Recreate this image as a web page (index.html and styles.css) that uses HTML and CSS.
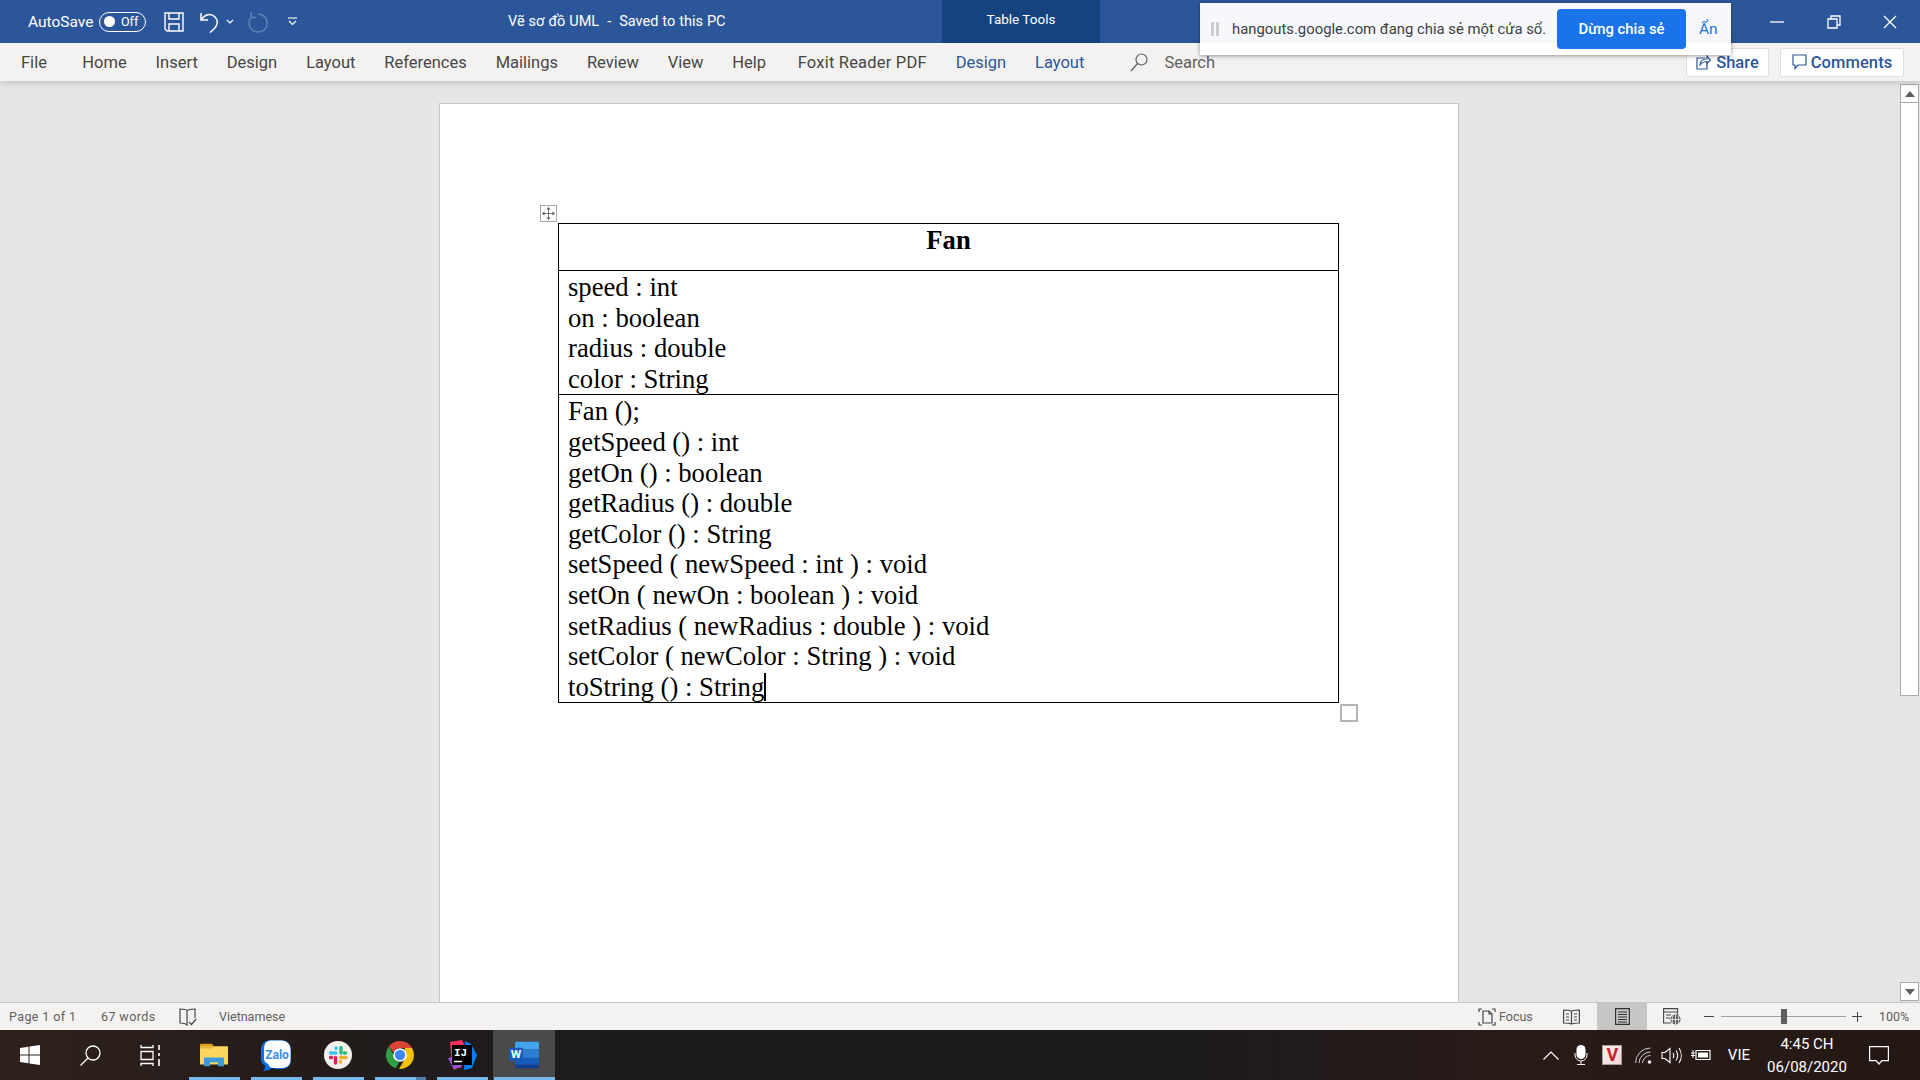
FILE: index.html
```html
<!DOCTYPE html>
<html lang="en">

<head>
    <meta charset="UTF-8">
    <title>Vẽ sơ đồ UML - Word</title>
    <link rel="stylesheet" href="styles.css">
</head>

<body>

    <div class="titlebar">
        <div class="qat">
            <span class="autosave">AutoSave</span>
            <span class="toggle"><i class="knob"></i><span>Off</span></span>
            <svg class="ico-save" width="20" height="20" viewBox="0 0 20 20" fill="none" stroke="#fff" stroke-width="1.4">
                <path d="M1 1h18v18H3l-2-2z"/><path d="M5 1v6h10V1"/><path d="M5 19v-7h10v7"/>
            </svg>
            <svg class="ico-undo" width="19" height="22" viewBox="0 0 19 22" fill="none" stroke="#fff" stroke-width="1.5">
                <path d="M1 2v7h7"/><path d="M1.5 8.5C5 3 11 2 15 6c4 4 2 9-1 12l-4 3.500"/>
            </svg>
            <svg class="ico-caret" width="8" height="5" viewBox="0 0 8 5" fill="none" stroke="#fff" stroke-width="1.200"><path d="M1 1l3 3 3-3"/></svg>
            <svg class="ico-redo" width="20" height="22" viewBox="0 0 20 22" fill="none" stroke="#5f83b8" stroke-width="1.500">
                <path d="M10 3a9 9 0 1 1-7 3.500"/><path d="M3 1v5.500h5"/>
            </svg>
            <svg class="ico-more" width="9" height="9" viewBox="0 0 9 9" fill="none" stroke="#fff" stroke-width="1.100"><path d="M0 1h9"/><path d="M1 4l3.500 3.500L8 4"/></svg>
        </div>
        <div class="doc-title">Vẽ sơ đồ UML &nbsp;-&nbsp; Saved to this PC</div>
        <div class="context">Table Tools</div>
        <div class="win-controls">
            <svg width="14" height="14" viewBox="0 0 14 14" stroke="#fff" stroke-width="1.300"><path d="M0 7h14"/></svg>
            <svg width="14" height="14" viewBox="0 0 14 14" fill="none" stroke="#fff" stroke-width="1.300"><path d="M1 4h9v9H1z"/><path d="M4 4V1h9v9h-3"/></svg>
            <svg width="14" height="14" viewBox="0 0 14 14" stroke="#fff" stroke-width="1.300"><path d="M1 1l12 12M13 1L1 13"/></svg>
        </div>
    </div>

    <div class="ribbon">
        <nav class="tabs">
            <a class="tab tab-file">File</a>
            <a class="tab">Home</a>
            <a class="tab">Insert</a>
            <a class="tab">Design</a>
            <a class="tab">Layout</a>
            <a class="tab">References</a>
            <a class="tab">Mailings</a>
            <a class="tab">Review</a>
            <a class="tab">View</a>
            <a class="tab">Help</a>
            <a class="tab tab-foxit">Foxit Reader PDF</a>
            <a class="tab tab-tool">Design</a>
            <a class="tab tab-tool">Layout</a>
        </nav>
        <div class="search">
            <svg width="18" height="19" viewBox="0 0 18 19" fill="none" stroke="#605e5c" stroke-width="1.200"><circle cx="11.500" cy="6.500" r="5.500"/><path d="M7.500 10.500L1 18"/></svg>
            <span>Search</span>
        </div>
        <div class="ribbon-actions">
            <a class="pill pill-share">
                <svg width="15" height="16" viewBox="0 0 15 16" fill="none" stroke="#2b579a" stroke-width="1.200"><path d="M9 4H1v11h10V9"/><path d="M4 11c0-4 3-6 7-6V2l3.500 4L11 9.500V7.500c-3 0-5 1-7 3.500z"/></svg>
                Share
            </a>
            <a class="pill pill-comments">
                <svg width="15" height="16" viewBox="0 0 15 16" fill="none" stroke="#2b579a" stroke-width="1.200"><path d="M1 1h13v10H6l-3 3.500V11H1z"/></svg>
                Comments
            </a>
        </div>
    </div>

    <div class="share-bar">
        <span class="grip"><i></i><i></i></span>
        <span class="share-text">hangouts.google.com đang chia sẻ một cửa sổ.</span>
        <button class="stop-btn">Dừng chia sẻ</button>
        <span class="hide-link">Ẩn</span>
    </div>

    <div class="workspace">
        <div class="doc-area">
            <div class="page">
                <div class="table-wrap">
                    <span class="move-handle">
                        <svg width="13" height="13" viewBox="0 0 13 13" fill="#555" stroke="#555" stroke-width=".8">
                            <path d="M6.500 1v11M1 6.500h11" fill="none"/>
                            <path d="M6.500 0l2 2.500H4.500zM6.500 13l-2-2.500h4zM0 6.500l2.500-2v4zM13 6.500l-2.500 2v-4z" stroke="none"/>
                        </svg>
                    </span>
                    <table class="uml">
                        <tr class="row-name"><td>Fan</td></tr>
                        <tr class="row-attrs">
                            <td>
                                speed : int<br>
                                on : boolean<br>
                                radius : double<br>
                                color : String
                            </td>
                        </tr>
                        <tr class="row-methods">
                            <td>
                                Fan ();<br>
                                getSpeed () : int<br>
                                getOn () : boolean<br>
                                getRadius () : double<br>
                                getColor () : String<br>
                                setSpeed ( newSpeed : int ) : void<br>
                                setOn ( newOn : boolean ) : void<br>
                                setRadius ( newRadius : double ) : void<br>
                                setColor ( newColor : String ) : void<br>
                                toString () : String<span class="caret"></span>
                            </td>
                        </tr>
                    </table>
                    <span class="resize-handle"></span>
                </div>
            </div>
        </div>
        <div class="scrollbar">
            <span class="sb-btn"><i class="arrow-up"></i></span>
            <span class="sb-thumb"></span>
            <span class="sb-track"></span>
            <span class="sb-btn"><i class="arrow-down"></i></span>
        </div>
    </div>

    <div class="statusbar">
        <span class="st-page">Page 1 of 1</span>
        <span class="st-words">67 words</span>
        <svg class="st-book" width="18" height="18" viewBox="0 0 18 18" fill="none" stroke="#484644" stroke-width="1.200">
            <path d="M9 3C7 1 4 1 1 1v14c3 0 5 0 7 2V3c2-2 5-2 8-2v9"/><path d="M10 14l2.500 2.500L17 11"/>
        </svg>
        <span class="st-lang">Vietnamese</span>
        <div class="st-right">
            <svg class="st-focus" width="18" height="18" viewBox="0 0 18 18" fill="none" stroke="#484644" stroke-width="1.200">
                <path d="M1 4V1h3M14 1h3v3M17 14v3h-3M4 17H1v-3"/><path d="M5 3h6l3 3v9H5z"/><path d="M11 3v3h3"/>
            </svg>
            <span class="st-focus-text">Focus</span>
            <svg class="st-read" width="17" height="16" viewBox="0 0 17 16" fill="none" stroke="#484644" stroke-width="1.200">
                <path d="M8.500 2C6 1 3 1 .600 1v13c2.400 0 5.400 0 7.900 1 2.500-1 5.500-1 7.900-1V1C14 1 11 1 8.500 2zM8.500 2v13"/>
                <path d="M3 5h3M3 8h3M3 11h3M11 5h3M11 8h3M11 11h3" stroke-width="1"/>
            </svg>
            <span class="st-view">
                <svg width="15" height="17" viewBox="0 0 15 17" fill="none" stroke="#323130" stroke-width="1.200">
                    <path d="M.600.600h13.800v15.800H.600z"/><path d="M3 4h9M3 6.500h9M3 9h9M3 11.500h9M3 14h9" stroke-width="1"/>
                </svg>
            </span>
            <svg class="st-web" width="18" height="17" viewBox="0 0 18 17" fill="none" stroke="#484644" stroke-width="1.100">
                <path d="M8 15H.600V.600h14V7"/><path d="M.600 4h14M3 7h5M3 10h4"/>
                <circle cx="12.500" cy="11.500" r="5" fill="#605e5c" stroke="none"/>
                <path d="M8 11.500h9M12.500 7v9M10 7.800c-1 2.400-1 5 0 7.400M15 7.800c1 2.400 1 5 0 7.400" stroke="#f3f2f1" stroke-width=".8"/>
            </svg>
            <span class="zoom-minus"></span>
            <span class="zoom-slider"><i></i></span>
            <span class="zoom-plus"></span>
            <span class="st-zoom">100%</span>
        </div>
    </div>

    <div class="taskbar">
        <div class="task-sys">
            <span class="task-item">
                <svg width="20" height="20" viewBox="0 0 20 20" fill="#fff"><path d="M0 3l8.500-1.200v7.700H0zM9.500 1.600L20 0v9.500H9.500zM0 10.500h8.500v7.700L0 17zM9.500 10.500H20V20L9.500 18.400z"/></svg>
            </span>
            <span class="task-item">
                <svg width="21" height="21" viewBox="0 0 21 21" fill="none" stroke="#fff" stroke-width="1.300"><circle cx="13" cy="8" r="7"/><path d="M8 13l-7.500 7.500"/></svg>
            </span>
            <span class="task-item">
                <svg width="21" height="21" viewBox="0 0 21 21" fill="none" stroke="#fff" stroke-width="1.300">
                    <path d="M1 0v2.500h12V0M1 6.500h12v8H1zM1 21v-2.500h12V21"/><path d="M19 0v5M19 8v3M19 14v7" stroke-width="1.600"/>
                </svg>
            </span>
        </div>
        <div class="task-apps">
            <span class="app">
                <svg width="28" height="24" viewBox="0 0 28 30" preserveAspectRatio="none">
                    <path d="M0 2a1 1 0 0 1 1-1h11l2 3H0z" fill="#d9a21c"/>
                    <path d="M0 4h27a1 1 0 0 1 1 1v22H0z" fill="#fbd65c"/>
                    <path d="M0 4h14l-2 3H0z" fill="#eab637"/>
                    <path d="M4 29V19a1 1 0 0 1 1-1h18a1 1 0 0 1 1 1v10h-6v-5h-8v5z" fill="#3d9bdc"/>
                </svg>
            </span>
            <span class="app">
                <svg width="30" height="31" viewBox="0 0 30 31">
                    <path d="M10 0h10c6 0 10 4 10 10v10c0 6-4 9-10 9-3 0-6 0-9-1-2 2-5 3-9 2.500 2-1.500 2.500-3 2-5C1 24 0 22 0 19V10C0 4 4 0 10 0z" fill="#0a6fe8"/>
                    <path d="M10 .500h10c6 0 9.500 3.500 9.500 9.500v9.500c0 6-3.500 8.500-9.500 8.500h-9c-2 0-3-3-4-4-2-1-4-3-4-5V10C3 4 5 .500 10 .500z" fill="#fff"/>
                    <text x="16" y="19" font-family="Roboto, sans-serif" font-size="12" font-weight="700" fill="#3b8eea" text-anchor="middle">Zalo</text>
                </svg>
            </span>
            <span class="app">
                <svg width="28" height="28" viewBox="0 0 28 28" stroke-linecap="round" stroke-width="3.400" fill="none">
                    <circle cx="14" cy="14" r="14" fill="#f4f1ed" stroke="none"/>
                    <path d="M17 6.500v5.500" stroke="#2eb67d"/><path d="M21.500 12h-1" stroke="#2eb67d"/>
                    <path d="M16.500 16.500H22" stroke="#ecb22e"/><path d="M16.500 21v-.500" stroke="#ecb22e"/>
                    <path d="M11.500 16.500V22" stroke="#e01e5a"/><path d="M6.500 16.500h1" stroke="#e01e5a"/>
                    <path d="M6.500 12H12" stroke="#36c5f0"/><path d="M12 7v.500" stroke="#36c5f0"/>
                </svg>
            </span>
            <span class="app app-stack">
                <svg width="28" height="28" viewBox="0 0 28 28">
                    <path d="M14 0a14 14 0 0 1 12.100 7H14a7 7 0 0 0-6.500 4.500L2.800 5.500A14 14 0 0 1 14 0z" fill="#db4437"/>
                    <path d="M2.800 5.500l5.500 9.500a6.500 6.500 0 0 0 5 6L9.700 27.300A14 14 0 0 1 2.800 5.500z" fill="#2f9e44"/>
                    <path d="M26.100 7A14 14 0 0 1 14 28h-1l5.300-9.300A7 7 0 0 0 19 10.500L18.500 7z" fill="#f4c20d"/>
                    <circle cx="14" cy="14" r="6.800" fill="#fff"/>
                    <circle cx="14" cy="14" r="5.200" fill="#4285f4"/>
                </svg>
            </span>
            <span class="app">
                <svg width="30" height="30" viewBox="0 0 30 30">
                    <path d="M3 2l12-2 3 6-4 22-9-2z" fill="#fe315d"/>
                    <path d="M18 1l6 3 6 11-5 13-8 2z" fill="#087cfa"/>
                    <path d="M1 18l6 12 8-4-6-10z" fill="#9b4fd1"/>
                    <rect x="5" y="5" width="20" height="20" fill="#000"/>
                    <text x="7" y="16" font-family="'Liberation Mono', monospace" font-size="11" font-weight="700" fill="#fff">IJ</text>
                    <path d="M7 21.500h8" stroke="#fff" stroke-width="1.500"/>
                </svg>
            </span>
            <span class="app app-active">
                <svg width="30" height="28" viewBox="0 0 30 33" preserveAspectRatio="none">
                    <path d="M7 1h22a1 1 0 0 1 1 1v8H6V2a1 1 0 0 1 1-1z" fill="#41a5ee"/>
                    <rect x="6" y="10" width="24" height="10" fill="#2b7cd3"/>
                    <rect x="6" y="20" width="24" height="8" fill="#185abd"/>
                    <path d="M6 28h24v3a1 1 0 0 1-1 1H7a1 1 0 0 1-1-1z" fill="#103f91"/>
                    <rect x="0" y="8" width="14" height="15" rx="1" fill="#185abd"/>
                    <text x="7" y="20" font-family="Roboto, sans-serif" font-size="12" font-weight="700" fill="#fff" text-anchor="middle">W</text>
                </svg>
            </span>
        </div>
        <div class="tray">
            <svg class="tr-up" width="16" height="9" viewBox="0 0 16 9" fill="none" stroke="#fff" stroke-width="1.200"><path d="M.500 8.500L8 1l7.500 7.500"/></svg>
            <svg class="tr-mic" width="14" height="20" viewBox="0 0 14 20"><rect x="2.500" y="0" width="9" height="14" rx="4.500" fill="#fff"/><path d="M1 8v2a6 6 0 0 0 12 0V8M7 16v3M3 19.500h8" fill="none" stroke="#fff" stroke-width="1"/></svg>
            <span class="tr-v">V</span>
            <svg class="tr-wifi" width="17" height="17" viewBox="0 0 17 17" fill="none" stroke="#d0cccb" stroke-width="1"><path d="M.500 16A15 15 0 0 1 15.500 1M4 16A11.500 11.500 0 0 1 15.500 5M7.500 16a8 8 0 0 1 8-7.500"/><circle cx="14.500" cy="15" r="1.800" fill="#fff" stroke="none"/></svg>
            <svg class="tr-sound" width="21" height="17" viewBox="0 0 21 17" fill="none" stroke="#fff" stroke-width="1.100"><path d="M1 5.500h3L9 1.500v14l-5-4H1z"/><path d="M12 6c1 1.500 1 3.500 0 5M15 3.500c2 3 2 7 0 10M18 1c3 4.500 3 10.500 0 15"/></svg>
            <svg class="tr-batt" width="20" height="12" viewBox="0 0 20 12"><path d="M5 1.500h14v9H5z" fill="none" stroke="#fff" stroke-width="1.200"/><path d="M7 3.500h10v5H7z" fill="#fff"/><path d="M0 4h4M2 1v8M0 6.500h4" stroke="#fff" stroke-width="1" fill="none"/></svg>
            <span class="tr-lang">VIE</span>
            <span class="tr-clock"><span>4:45 CH</span><span>06/08/2020</span></span>
            <svg class="tr-notif" width="20" height="19" viewBox="0 0 20 19" fill="none" stroke="#fff" stroke-width="1.200"><path d="M.600.600h18.800v14h-6.500L10 18l-3-3.400H.600z"/></svg>
        </div>
    </div>

</body>

</html>
```

FILE: styles.css
```css
html,
body {
    height: 100%;
    margin: 0;
    overflow: hidden;
}

body {
    display: flex;
    flex-direction: column;
    position: relative;
    font-family: Roboto, "Noto Sans", sans-serif;
    background: #e6e6e6;
    color: #444;
}

/* title bar */
.titlebar {
    flex: none;
    height: 43px;
    display: flex;
    align-items: center;
    background: #2b579a;
    color: #fff;
}

.qat {
    width: 508px;
    padding-left: 28px;
    box-sizing: border-box;
    display: flex;
    align-items: center;
}

.autosave {
    font-size: 15.5px;
    width: 71px;
}

.toggle {
    width: 47px;
    height: 20px;
    box-sizing: border-box;
    border: 1px solid #fff;
    border-radius: 10px;
    display: flex;
    align-items: center;
    font-size: 12.5px;
    padding-left: 4px;
}

.knob {
    width: 11px;
    height: 11px;
    border-radius: 50%;
    background: #fff;
    margin-right: 6px;
}

.ico-save { margin-left: 18px; }
.ico-undo { margin-left: 16px; }
.ico-caret { margin-left: 7px; }
.ico-redo { margin-left: 14px; }
.ico-more { margin-left: 20px; }

.doc-title {
    width: 434px;
    font-size: 14.5px;
    word-spacing: 0.4px;
}

.context {
    width: 158px;
    height: 43px;
    line-height: 39px;
    background: #144380;
    text-align: center;
    font-size: 13.5px;
}

.win-controls {
    margin-left: auto;
    width: 150px;
    padding-right: 23px;
    box-sizing: border-box;
    display: flex;
    justify-content: space-between;
}

/* ribbon */
.ribbon {
    flex: none;
    height: 38px;
    display: flex;
    align-items: center;
    background: #f3f2f1;
    box-shadow: 0 2px 7px rgba(0, 0, 0, 0.16);
    position: relative;
    z-index: 1;
}

.tabs {
    display: flex;
    gap: 28.9px;
    padding-left: 21px;
    font-size: 16.5px;
    color: #484644;
}

.tab-file { margin-right: 6.5px; }
.tab-foxit { margin-left: 2.7px; letter-spacing: 0.2px; }
.tab-tool { color: #2b579a; }

.search {
    display: flex;
    align-items: center;
    gap: 16px;
    margin-left: 46px;
    font-size: 16.5px;
    color: #605e5c;
}

.ribbon-actions {
    margin-left: auto;
    margin-right: 16px;
    display: flex;
    gap: 11px;
}

.pill {
    height: 29px;
    box-sizing: border-box;
    border: 1px solid #e1dfdd;
    border-radius: 2px;
    background: #fff;
    color: #2b579a;
    font-size: 16.5px;
    font-weight: 500;
    display: flex;
    align-items: center;
    justify-content: center;
    gap: 5px;
}

.pill-share { width: 83px; }
.pill-comments { width: 124px; gap: 4px; letter-spacing: 0.1px; }

/* screen share notice, floats over the window */
.share-bar {
    position: absolute;
    left: 1200px;
    top: 3px;
    width: 531px;
    height: 52px;
    box-sizing: border-box;
    padding: 0 13px 0 11px;
    display: flex;
    align-items: center;
    background: rgba(255, 255, 255, 0.96);
    box-shadow: 0 1px 4px rgba(0, 0, 0, 0.4);
    z-index: 2;
}

.grip {
    display: flex;
    gap: 2px;
    margin-right: 13px;
}

.grip i {
    width: 3px;
    height: 14px;
    background: #c9cbcf;
}

.share-text {
    font-size: 14.85px;
    color: #3c4043;
    width: 325px;
}

.stop-btn {
    width: 129px;
    height: 40px;
    border: none;
    border-radius: 4px;
    background: #1a73e8;
    color: #fff;
    font-family: inherit;
    font-size: 14.8px;
    font-weight: 500;
}

.hide-link {
    margin-left: 13px;
    font-size: 15.5px;
    color: #1a73e8;
}

/* document */
.workspace {
    flex: 1;
    min-height: 0;
    display: flex;
}

.doc-area {
    flex: 1;
    min-width: 0;
    overflow: hidden;
    display: flex;
    justify-content: center;
}

.page {
    width: 1020px;
    height: 1200px;
    flex: none;
    box-sizing: border-box;
    margin: 22px 2px 0 0;
    padding: 119px 0 0 118px;
    background: #fff;
    border: 1px solid #c6c6c6;
}

.table-wrap {
    position: relative;
    width: 781px;
}

.uml {
    width: 781px;
    border-collapse: collapse;
    font-family: "Liberation Serif", serif;
    font-size: 26.67px;
    line-height: 30.6px;
    color: #000;
}

.uml td {
    border: 1.5px solid #000;
    padding: 0 9px;
    vertical-align: top;
}

.row-name td {
    height: 47px;
    box-sizing: border-box;
    padding-top: 1px;
    text-align: center;
    font-weight: bold;
}

.row-attrs td {
    height: 124px;
    box-sizing: border-box;
    padding-top: 1px;
}

.row-methods td {
    height: 307px;
    box-sizing: border-box;
    padding-top: 1px;
}

.caret {
    display: inline-block;
    width: 1.5px;
    height: 28px;
    background: #000;
    vertical-align: -5px;
}

.move-handle {
    position: absolute;
    left: -18px;
    top: -18px;
    width: 17px;
    height: 17px;
    box-sizing: border-box;
    border: 1.5px solid #a8a8a8;
    background: #fff;
    display: flex;
    align-items: center;
    justify-content: center;
}

.resize-handle {
    position: absolute;
    right: -19px;
    bottom: -19px;
    width: 18px;
    height: 18px;
    box-sizing: border-box;
    border: 2px solid #b5b5b5;
    background: #fff;
}

/* scrollbar */
.scrollbar {
    flex: none;
    width: 20px;
    box-sizing: border-box;
    padding: 3px 1px 1px 0;
    display: flex;
    flex-direction: column;
}

.sb-btn {
    height: 19px;
    flex: none;
    box-sizing: border-box;
    border: 1px solid #ababab;
    background: #fff;
    display: flex;
    align-items: center;
    justify-content: center;
}

.arrow-up,
.arrow-down {
    border-left: 5px solid transparent;
    border-right: 5px solid transparent;
}

.arrow-up { border-bottom: 6px solid #605e5c; }
.arrow-down { border-top: 6px solid #605e5c; }

.sb-thumb {
    height: 593px;
    flex: none;
    box-sizing: border-box;
    border: 1px solid #ababab;
    border-top: none;
    background: #fff;
}

.sb-track { flex: 1; }

/* status bar */
.statusbar {
    flex: none;
    height: 28px;
    box-sizing: border-box;
    border-top: 1px solid #c6c6c6;
    background: #f3f2f1;
    display: flex;
    align-items: center;
    font-size: 12.5px;
    color: #605e5c;
    padding-left: 9px;
}

.st-page { width: 92px; letter-spacing: 0.4px; }
.st-words { width: 78px; letter-spacing: 0.4px; }
.st-book { width: 18px; }
.st-lang { margin-left: 22px; }

.st-right {
    margin-left: auto;
    height: 100%;
    display: flex;
    align-items: center;
}

.st-focus-text {
    margin-left: 3px;
    width: 64px;
}

.st-view {
    width: 50px;
    height: 100%;
    margin-left: 17px;
    background: #c8c6c4;
    display: flex;
    align-items: center;
    justify-content: center;
}

.st-web { margin-left: 16px; }

.zoom-minus,
.zoom-plus {
    width: 10px;
    height: 10px;
    position: relative;
    background: linear-gradient(#484644, #484644) center / 10px 1px no-repeat;
}

.zoom-minus { margin-left: 23px; }

.zoom-plus {
    background:
        linear-gradient(#484644, #484644) center / 10px 1px no-repeat,
        linear-gradient(#484644, #484644) center / 1px 10px no-repeat;
}

.zoom-slider {
    width: 125px;
    height: 1px;
    margin: 0 6px 0 7px;
    background: #a19f9d;
    position: relative;
}

.zoom-slider i {
    position: absolute;
    left: 60px;
    top: -7px;
    width: 6px;
    height: 15px;
    background: #605e5c;
}

.st-zoom {
    width: 58px;
    padding-left: 17px;
    box-sizing: border-box;
}

/* taskbar */
.taskbar {
    flex: none;
    height: 50px;
    display: flex;
    color: #fff;
    background: linear-gradient(to right, #2f211b 0, #241c1b 300px, #1c1b1e 620px, #1d1a1c 1200px, #291b18 1500px, #241815 100%);
}

.task-sys {
    display: flex;
}

.task-item {
    width: 60px;
    display: flex;
    align-items: center;
    justify-content: center;
}

.task-apps {
    display: flex;
    margin-left: 3px;
}

.app {
    width: 62px;
    display: flex;
    align-items: center;
    justify-content: center;
    position: relative;
}

.app::after {
    content: "";
    position: absolute;
    left: 6px;
    right: 5px;
    bottom: 0;
    height: 3px;
    background: #76b9ed;
}

.app-stack::after {
    background: linear-gradient(to right, #76b9ed 80%, #4d80ab 80%);
}

.app-active {
    background: #4a4a4a;
}

.app-active::after {
    left: 1px;
    right: 0;
}

.tray {
    margin-left: auto;
    display: flex;
    align-items: center;
    font-size: 15px;
    padding-right: 31px;
}

.tr-mic { margin-left: 15px; }

.tr-v {
    margin-left: 14px;
    width: 20px;
    height: 20px;
    background: linear-gradient(135deg, #fbeeee, #efd9d7);
    border: 1.5px solid #a89c9a;
    box-sizing: border-box;
    color: #c9252e;
    font-size: 18px;
    font-weight: 700;
    line-height: 17px;
    text-align: center;
}

.tr-wifi { margin-left: 13px; }
.tr-sound { margin-left: 8.5px; }
.tr-batt { margin-left: 9px; }
.tr-lang { margin-left: 17px; }

.tr-clock {
    width: 100px;
    margin-left: 7px;
    display: flex;
    flex-direction: column;
    align-items: center;
    gap: 5px;
    line-height: 18px;
}

.tr-notif { margin-left: 12px; }
```
